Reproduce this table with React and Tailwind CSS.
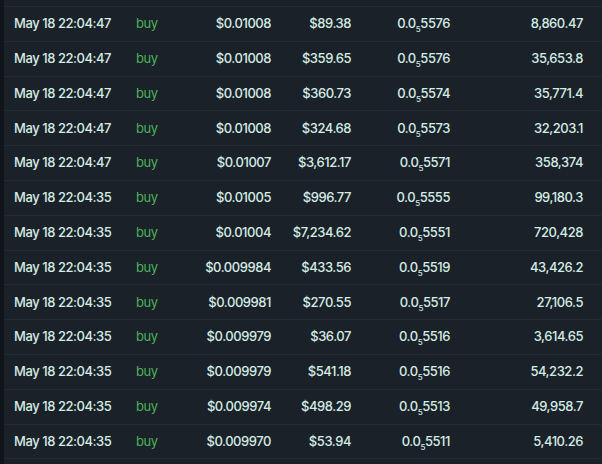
const trades = [
  ["May 18 22:04:47", "$0.01008", "$89.38", "5576", "8,860.47"],
  ["May 18 22:04:47", "$0.01008", "$359.65", "5576", "35,653.8"],
  ["May 18 22:04:47", "$0.01008", "$360.73", "5574", "35,771.4"],
  ["May 18 22:04:47", "$0.01008", "$324.68", "5573", "32,203.1"],
  ["May 18 22:04:47", "$0.01007", "$3,612.17", "5571", "358,374"],
  ["May 18 22:04:35", "$0.01005", "$996.77", "5555", "99,180.3"],
  ["May 18 22:04:35", "$0.01004", "$7,234.62", "5551", "720,428"],
  ["May 18 22:04:35", "$0.009984", "$433.56", "5519", "43,426.2"],
  ["May 18 22:04:35", "$0.009981", "$270.55", "5517", "27,106.5"],
  ["May 18 22:04:35", "$0.009979", "$36.07", "5516", "3,614.65"],
  ["May 18 22:04:35", "$0.009979", "$541.18", "5516", "54,232.2"],
  ["May 18 22:04:35", "$0.009974", "$498.29", "5513", "49,958.7"],
  ["May 18 22:04:35", "$0.009970", "$53.94", "5511", "5,410.26"],
];

export default function App() {
  return (
    <div
      className="w-[602px] h-[464px] overflow-hidden bg-[#0f151a] pl-[4px]"
      style={{ fontFamily: "Inter, 'Noto Sans', sans-serif" }}
    >
      <div className="h-full bg-[#1a2129] pt-[6px]">
        {trades.map((t, i) => (
          <div
            key={i}
            className="grid grid-cols-[10px_122px_60px_75px_80px_99px_133px] items-center h-[34.8px] border-t border-[#232c35] text-[13px] font-medium tracking-[-0.45px] text-[#d5ece4]"
          >
            <div />
            <div>{t[0]}</div>
            <div className="text-[#4bb35a] font-normal">buy</div>
            <div className="text-right">{t[1]}</div>
            <div className="text-right">{t[2]}</div>
            <div className="text-right">
              0.0<sub className="text-[8px] relative top-[4px] align-baseline">5</sub>
              {t[3]}
            </div>
            <div className="text-right">{t[4]}</div>
          </div>
        ))}
        <div className="border-t border-[#232c35]" />
      </div>
    </div>
  );
}
